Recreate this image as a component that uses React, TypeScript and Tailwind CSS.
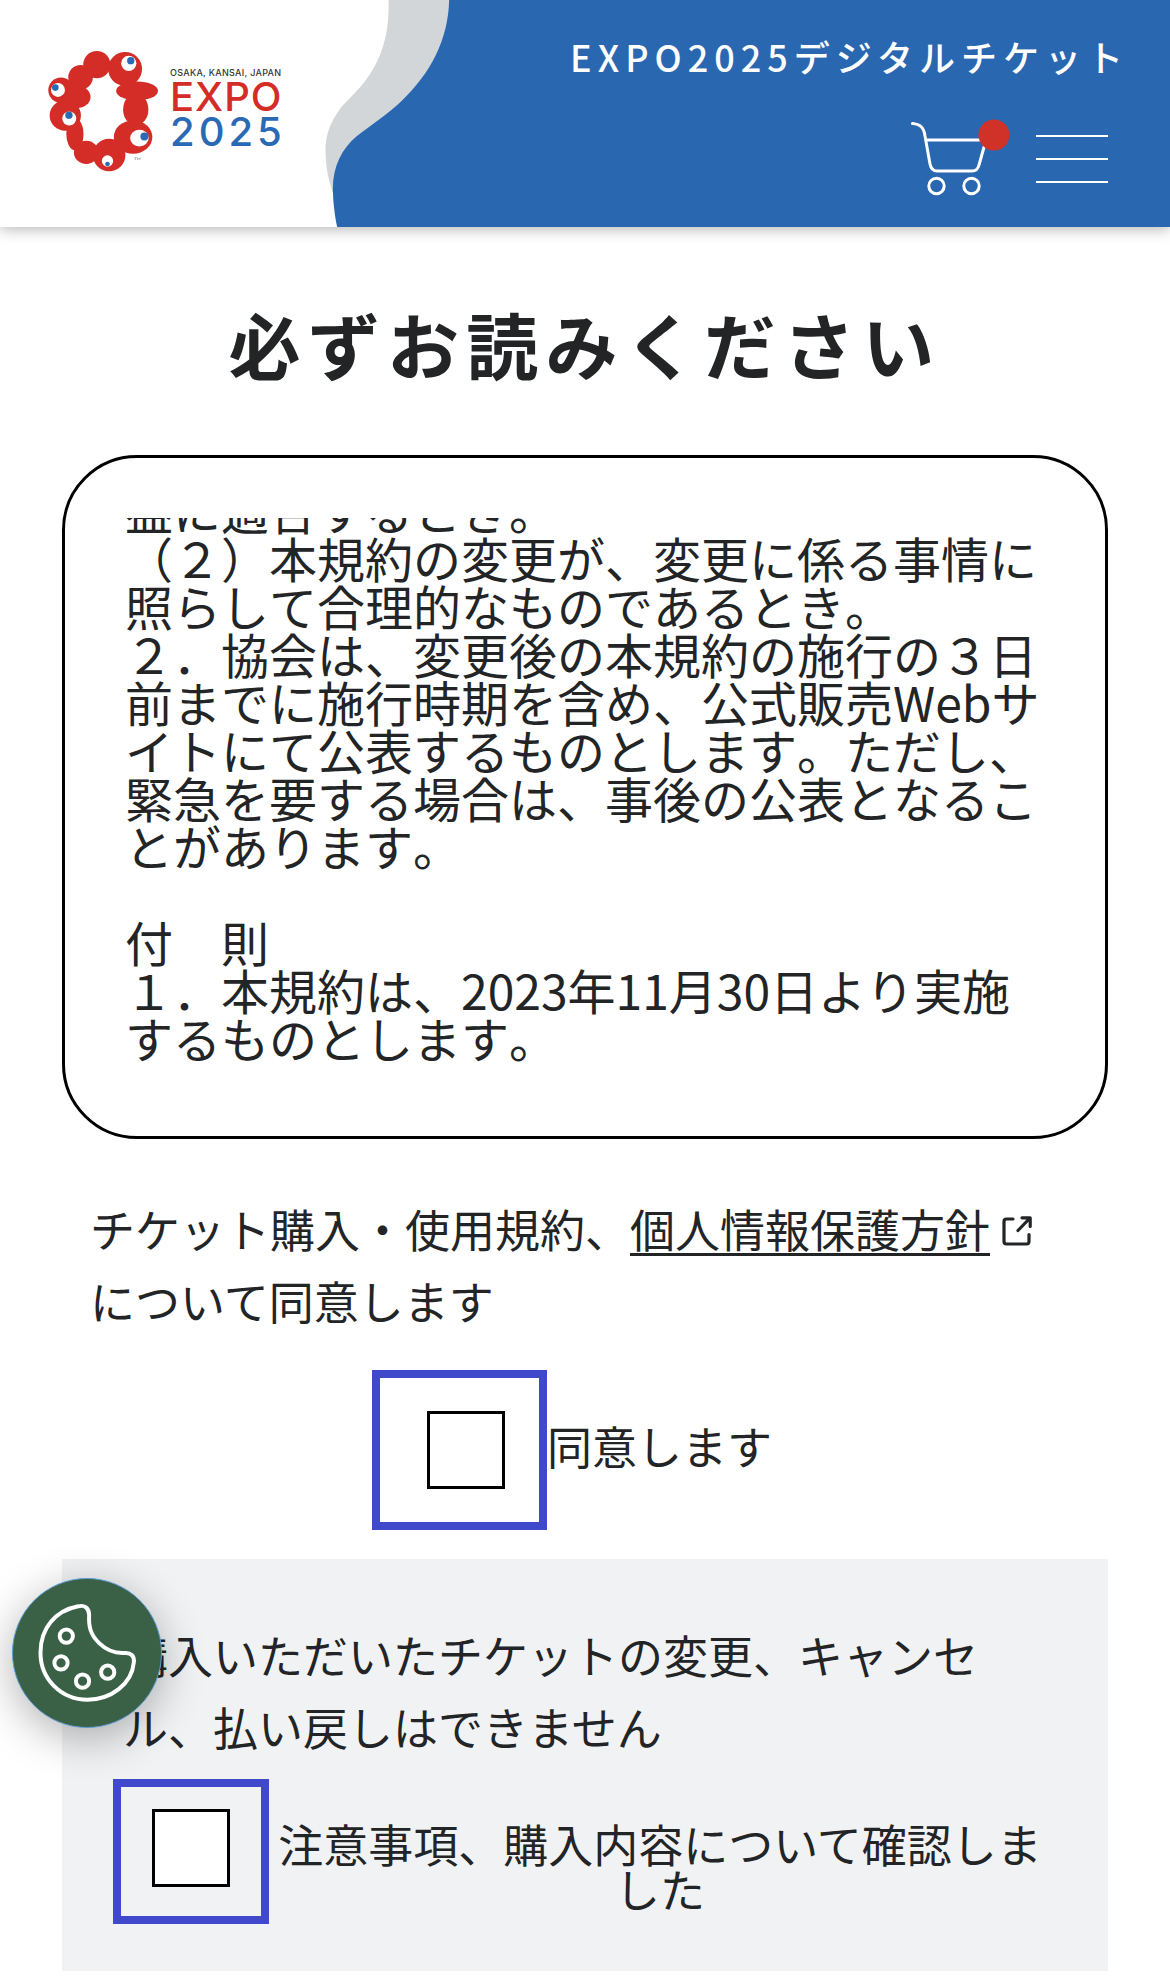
import { useLayoutEffect, useRef } from "react";
import type { ReactNode } from "react";

function LogoMark() {
  return (
    <svg viewBox="50 60 340 365" className="h-[122px] w-[113px] shrink-0" aria-hidden="true">
      <g fill="#d42c26">
        <circle cx="200" cy="103" r="41" />
        <circle cx="285" cy="116" r="51" />
        <ellipse cx="321" cy="182" rx="63" ry="28" />
        <ellipse cx="317" cy="238" rx="38" ry="48" />
        <ellipse cx="309" cy="321" rx="58" ry="50" />
        <circle cx="151" cy="141" r="37" />
        <circle cx="92" cy="180" r="38" />
        <ellipse cx="140" cy="200" rx="41" ry="34" />
        <ellipse cx="105" cy="256" rx="47" ry="46" />
        <ellipse cx="134" cy="312" rx="26" ry="48" />
        <ellipse cx="168" cy="367" rx="37" ry="35" />
        <ellipse cx="237" cy="375" rx="49" ry="49" />
      </g>
      <g fill="#fff">
        <circle cx="296" cy="99" r="23" />
        <circle cx="83" cy="179" r="21" />
        <circle cx="117" cy="265" r="21" />
        <ellipse cx="328" cy="324" rx="28" ry="25" />
        <circle cx="232" cy="393" r="17" />
      </g>
      <g fill="#2a6ab5">
        <circle cx="302" cy="91" r="11" />
        <circle cx="75" cy="172" r="10" />
        <circle cx="116" cy="255" r="11" />
        <circle cx="343" cy="319" r="12" />
        <circle cx="232" cy="402" r="7" />
      </g>
      <path d="M313 383H320M316 383V390M322 390V383L326 388L330 383V390" stroke="#777" strokeWidth="1.5" fill="none" />
    </svg>
  );
}

function HeaderWave() {
  return (
    <svg viewBox="0 0 540 681" preserveAspectRatio="none" className="h-full w-[181px] shrink-0" aria-hidden="true">
      <path
        d="M264 0C268 110 240 208 150 293C110 330 76 385 76 450C76 510 88 545 100 585L300 450L500 0Z"
        fill="#d2d6d9"
      />
      <path
        d="M445 0C442 120 390 220 300 306C255 347 215 373 170 408C125 445 97 500 98 570C99 610 104 650 111 681H540V0Z"
        fill="#2a67b1"
      />
    </svg>
  );
}

function CartIcon() {
  return (
    <svg viewBox="908 118 104 80" className="h-[80px] w-[104px]" aria-hidden="true">
      <g fill="none" stroke="#fff" strokeWidth="3" strokeLinecap="round" strokeLinejoin="round">
        <path d="M912.500 123.500C920 124 924 127 925 136L930 164C931 169 933 171 937 171H972C976 171 978 169 979 165L986 140H926" />
        <circle cx="936.500" cy="186" r="7.700" />
        <circle cx="971.500" cy="186" r="7.700" />
      </g>
      <circle cx="994" cy="135" r="15.500" fill="#d03228" />
    </svg>
  );
}

function ExternalIcon() {
  return (
    <svg
      viewBox="0 0 30 30"
      className="ml-3 inline-block size-[30px] align-[2px]"
      fill="none"
      stroke="#222426"
      strokeWidth="3.2"
      strokeLinecap="round"
      strokeLinejoin="round"
      aria-hidden="true"
    >
      <path d="M11 3H4.500Q2 3 2 5.500V25.500Q2 28 4.500 28H24.500Q27 28 27 25.500V18.500" />
      <path d="M16 14.500L28 2M20 1.800H28.200V10.500" />
    </svg>
  );
}

function CookieIcon() {
  return (
    <svg viewBox="112 182 304 308" className="h-[102px] w-[101px]" fill="none" stroke="#fff" strokeWidth="12" aria-hidden="true">
      <path
        d="M236 195C255 190 268 200 269 220C267 255 272 280 300 307C322 328 345 338 376 336C395 334 406 345 404 364C398 430 335 477 264 477C185 477 122 415 122 335C122 260 168 208 236 195Z"
        strokeLinejoin="round"
      />
      <circle cx="200" cy="285" r="20" />
      <circle cx="184" cy="366" r="20" />
      <circle cx="249" cy="421" r="20" />
      <circle cx="325" cy="394" r="20" />
    </svg>
  );
}

function Tick({ id }: { id: string }) {
  return (
    <input
      id={id}
      type="checkbox"
      className="size-[78px] shrink-0 appearance-none border-[3px] border-black bg-white checked:bg-[#2a67b1]"
    />
  );
}

function Terms({ children }: { children: ReactNode }) {
  const ref = useRef<HTMLDivElement>(null);
  useLayoutEffect(() => {
    if (ref.current) ref.current.scrollTop = ref.current.scrollHeight;
  }, []);
  return (
    <section className="rounded-[75px] border-[3px] border-black p-[60px]">
      <div
        ref={ref}
        className="h-[558px] overflow-y-auto text-[48px] leading-[48px] [font-kerning:none] [scrollbar-width:none]"
      >
        <div className="pb-[15px]">{children}</div>
      </div>
    </section>
  );
}

export default function App() {
  return (
    <div
      lang="ja"
      className="min-h-screen bg-white pb-3 font-['Noto_Sans_CJK_JP',sans-serif] text-[45px] leading-[72px] text-[#222426]"
    >
      <header className="flex h-[227px] bg-white shadow-[0_2px_14px_rgba(0,0,0,0.3)]">
        <a href="#top" className="flex w-[300px] shrink-0 items-start gap-[10px] pt-[50px] pl-[47px]">
          <LogoMark />
          <span className="flex flex-col pt-[17px] font-['Inter',sans-serif] font-medium whitespace-nowrap">
            <span className="text-[9px] leading-[12px] tracking-[0.3px] text-[#333]">OSAKA, KANSAI, JAPAN</span>
            <span className="text-[40px] leading-[35px] tracking-[1px] text-[#d42c26]">EXPO</span>
            <span className="text-[40px] leading-[35px] tracking-[4px] text-[#2a6ab5]">2025</span>
          </span>
        </a>
        <HeaderWave />
        <div className="-ml-px flex flex-1 flex-col items-end bg-[#2a67b1] pt-[30px] text-white">
          <p className="pr-[41px] text-[36px] leading-[52px] font-medium tracking-[6px] whitespace-nowrap">
            EXPO2025デジタルチケット
          </p>
          <div className="mt-9 flex items-center gap-6 pr-[62px]">
            <button type="button" aria-label="カート">
              <CartIcon />
            </button>
            <button type="button" aria-label="メニュー" className="mt-[2px] flex w-[72px] flex-col gap-[21px]">
              <span className="h-[2px] bg-white" />
              <span className="h-[2px] bg-white" />
              <span className="h-[2px] bg-white" />
            </button>
          </div>
        </div>
      </header>

      <main className="px-[62px]">
        <h1 className="pt-[62px] pb-[58px] text-center text-[72px] leading-[108px] font-bold tracking-[0.1em]">
          必ずお読みください
        </h1>

        <Terms>
          <p>益に適合するとき。</p>
          <p>（２）本規約の変更が、変更に係る事情に照らして合理的なものであるとき。</p>
          <p>
            ２．協会は、変更後の本規約の施行の３日前までに施行時期を含め、公式販売Webサイトにて公表するものとします。ただし、緊急を要する場合は、事後の公表となることがあります。
          </p>
          <p className="mt-12">付　則</p>
          <p>１．本規約は、2023年11月30日より実施するものとします。</p>
        </Terms>

        <p className="mt-[54px] pr-12 pl-7">
          チケット購入・使用規約、
          <a href="#privacy">
            <span className="underline decoration-[3px] underline-offset-[5px] [text-decoration-skip-ink:none]">
              個人情報保護方針
            </span>
            <ExternalIcon />
          </a>
          について同意します
        </p>

        <div className="mt-[33px] flex items-center justify-center pr-[26px]">
          <span className="flex h-[160px] w-[175px] items-center justify-end border-8 border-[#4048cc] pr-[34px]">
            <Tick id="agree" />
          </span>
          <label htmlFor="agree" className="-mt-2">
            同意します
          </label>
        </div>

        <section className="mt-[29px] bg-[#f1f2f4] pt-[60px] pb-[47px]">
          <p className="pr-24 pl-[61px]">購入いただいたチケットの変更、キャンセル、払い戻しはできません</p>
          <div className="mt-4 flex items-start gap-1 pr-[61px] pl-[51px]">
            <span className="flex h-[145px] w-[156px] shrink-0 justify-center border-8 border-[#4048cc] pt-[22px]">
              <Tick id="confirm" />
            </span>
            <label htmlFor="confirm" className="mt-[42px] flex-1 text-center leading-[45px]">
              注意事項、購入内容について確認しました
            </label>
          </div>
        </section>
      </main>

      <button
        type="button"
        aria-label="Cookie設定"
        className="fixed bottom-[256px] left-3 flex size-[150px] items-center justify-center rounded-full border border-[#5a9bd5] bg-[#3a6146] shadow-[0_10px_44px_rgba(0,0,0,0.3)]"
      >
        <CookieIcon />
      </button>
    </div>
  );
}
